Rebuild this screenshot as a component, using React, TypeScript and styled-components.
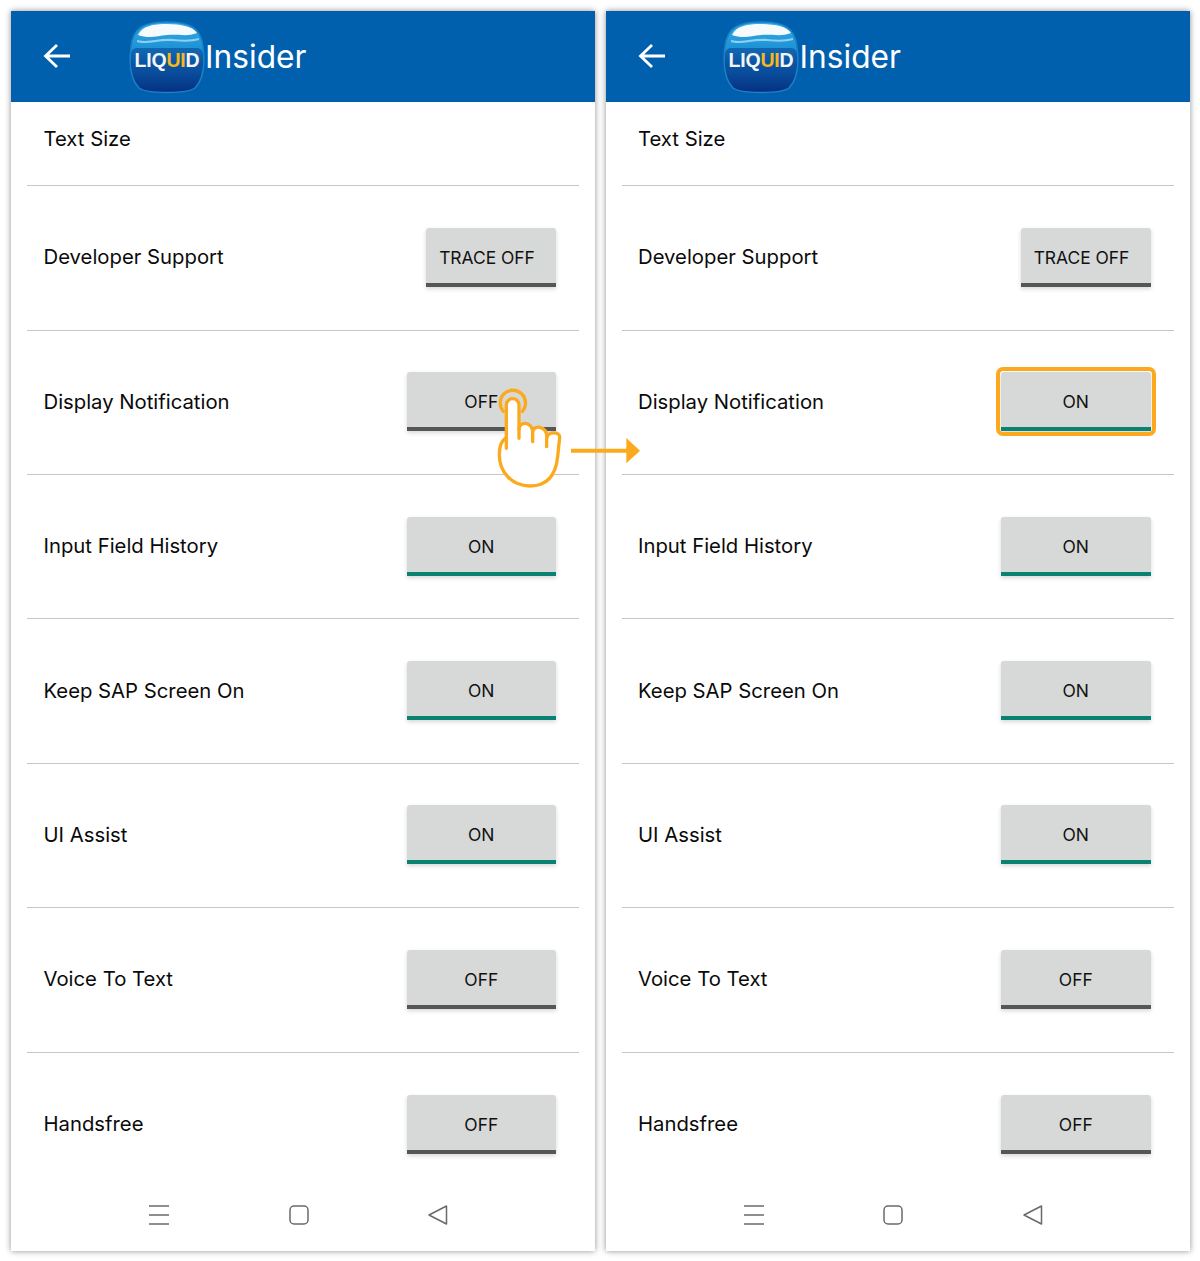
import React from "react";
import styled, { createGlobalStyle } from "styled-components";

const GlobalStyle = createGlobalStyle`
  html, body {
    margin: 0;
    padding: 0;
    background: #fff;
    font-family: Inter, "Liberation Sans", Arial, sans-serif;
  }
`;

const Page = styled.div`
  position: relative;
  width: 1200px;
  height: 1261px;
  padding: 11px 10px 10px 11px;
  box-sizing: border-box;
  display: flex;
  gap: 10.5px;
  overflow: hidden;
`;

const Panel = styled.section`
  width: 584px;
  height: 1240px;
  background: #fff;
  box-shadow: 0 0 6px rgba(0, 0, 0, 0.45);
  display: flex;
  flex-direction: column;
`;

const Header = styled.header`
  height: 91px;
  flex: none;
  background: #0060ae;
  display: flex;
  align-items: center;
  padding-left: 32px;
`;

const BackButton = styled.svg`
  width: 28px;
  height: 26px;
  flex: none;
  margin-right: 57.5px;
  margin-top: -2px;
`;

const Logo = styled.svg`
  width: 76px;
  height: 74px;
  flex: none;
  margin-top: 2px;
`;

const Brand = styled.span`
  margin-left: 0.5px;
  margin-top: 1px;
  font-size: 31.7px;
  line-height: 40px;
  color: #fff;
`;

const List = styled.div`
  flex: none;
  padding: 0 16px;
  display: flex;
  flex-direction: column;
`;

const Row = styled.div<{ $first?: boolean; $last?: boolean }>`
  box-sizing: border-box;
  height: ${(p) => (p.$first ? "84.2px" : "144.4px")};
  padding: ${(p) => (p.$first ? "0 23px 9px 16.5px" : "0 23px 1px 16.5px")};
  border-bottom: ${(p) => (p.$last ? "none" : "1.5px solid #c6c6c6")};
  display: flex;
  align-items: center;
  justify-content: space-between;
`;

const Label = styled.span`
  font-size: 20.3px;
  line-height: 28px;
  color: #0a0a0a;
`;

const Toggle = styled.button<{ $on?: boolean; $wide?: boolean; $focused?: boolean }>`
  position: relative;
  box-sizing: border-box;
  width: ${(p) => (p.$wide ? "130px" : "149.5px")};
  height: 59px;
  padding: 4px ${(p) => (p.$wide ? "8px" : "0")} 0 0;
  border: none;
  border-bottom: 4px solid ${(p) => (p.$on ? "#0a8271" : "#565656")};
  border-radius: 3px 3px 0 0;
  background: #d7d9d8;
  box-shadow: 0 2px 4px rgba(0, 0, 0, 0.16);
  font-family: inherit;
  font-size: 17.4px;
  color: #111;

  &::after {
    content: "";
    display: ${(p) => (p.$focused ? "block" : "none")};
    position: absolute;
    inset: -5px -5px -9px -5px;
    border: 4.5px solid #fca91f;
    border-radius: 7px;
  }
`;

const NavBar = styled.nav`
  flex: none;
  padding: 8.4px 0 0 138px;
  display: flex;
  gap: 119.5px;
`;

const NavIcon = styled.svg`
  width: 20px;
  height: 20px;
  flex: none;
`;

const TapGesture = styled.svg`
  position: absolute;
  left: 390px;
  top: 350px;
  width: 270px;
  height: 150px;
`;

const settings = [
  { label: "Input Field History", on: true },
  { label: "Keep SAP Screen On", on: true },
  { label: "UI Assist", on: true },
  { label: "Voice To Text", on: false },
  { label: "Handsfree", on: false },
];

const LiquidLogo = ({ id }: { id: string }) => (
  <Logo viewBox="0 0 76 74">
    <defs>
      <linearGradient id={`${id}-body`} x1="0" y1="0" x2="0" y2="1">
        <stop offset="0" stopColor="#35ade6" />
        <stop offset="0.42" stopColor="#1a8fd4" />
        <stop offset="0.6" stopColor="#0a5aa8" />
        <stop offset="1" stopColor="#062f80" />
      </linearGradient>
    </defs>
    <path
      d="M38 1 C60 1 72 6 74 26 C76 42 75 58 66 67 C58 73 18 73 10 67 C1 58 0 42 2 26 C4 6 16 1 38 1 Z"
      fill={`url(#${id}-body)`}
      stroke="#1b82c8"
      strokeWidth="1.5"
    />
    <path d="M9 14 C13 5 24 3 38 3 C52 3 65 6 68 12 C58 16 50 13 38 14 C28 15 20 18 9 14 Z" fill="#f6fafc" />
    <path d="M8 19 C20 22 30 17 44 18 C54 19 62 19 70 17 L70 19 C60 22 48 20 38 20 C28 20 16 24 8 21 Z" fill="#8fd0f0" />
    <rect x="2" y="27" width="72" height="24" rx="6" fill="#0a4f9c" opacity="0.65" />
    <text
      x="38"
      y="45.5"
      textAnchor="middle"
      fontFamily="'Liberation Sans', sans-serif"
      fontWeight="700"
      fontSize="19.5"
      letterSpacing="-0.2"
      fill="#f2f4f6"
    >
      LIQ<tspan fill="#f5b81c">UI</tspan>D
    </text>
  </Logo>
);

const PhonePanel = ({ id, focused }: { id: string; focused?: boolean }) => (
  <Panel>
    <Header>
      <BackButton viewBox="0 0 28 26" fill="none" stroke="#fff" strokeWidth="2.8">
        <path d="M27 13 H3 M14 2 L2.5 13 L14 24" />
      </BackButton>
      <LiquidLogo id={id} />
      <Brand>Insider</Brand>
    </Header>
    <List>
      <Row $first>
        <Label>Text Size</Label>
      </Row>
      <Row>
        <Label>Developer Support</Label>
        <Toggle $wide>TRACE OFF</Toggle>
      </Row>
      <Row>
        <Label>Display Notification</Label>
        <Toggle $on={focused} $focused={focused}>
          {focused ? "ON" : "OFF"}
        </Toggle>
      </Row>
      {settings.map((s, i) => (
        <Row key={s.label} $last={i === settings.length - 1}>
          <Label>{s.label}</Label>
          <Toggle $on={s.on}>{s.on ? "ON" : "OFF"}</Toggle>
        </Row>
      ))}
    </List>
    <NavBar>
      <NavIcon viewBox="0 0 20 20" fill="none" stroke="#6a6a6a" strokeWidth="1.5">
        <path d="M0 1 H20 M0 10 H20 M0 19 H20" />
      </NavIcon>
      <NavIcon viewBox="0 0 20 20" fill="none" stroke="#6a6a6a" strokeWidth="1.5">
        <rect x="1" y="1" width="18" height="18" rx="4" />
      </NavIcon>
      <NavIcon viewBox="0 0 20 20" fill="none" stroke="#6a6a6a" strokeWidth="1.5" strokeLinejoin="round">
        <path d="M1 10 L18.5 1 V19 Z" />
      </NavIcon>
    </NavBar>
  </Panel>
);

export default function App() {
  return (
    <Page>
      <GlobalStyle />
      <PhonePanel id="left" />
      <PhonePanel id="right" focused />
      <TapGesture viewBox="0 0 810 450" fill="none" stroke="#fcaa1d" strokeWidth="10" strokeLinecap="round" strokeLinejoin="round">
        <path d="M340 184 A38 38 0 1 1 397 184" />
        <path
          d="M349 262 C332 275 328 290 328 315 C328 362 362 408 420 408 C478 408 498 370 503 320 L509 262 C510 244 474 244 471 262 C470 226 430 224 428 245 C425 214 388 212 387 238 L387 165 A19 19 0 0 0 349 165 Z"
          fill="#fff"
        />
        <path d="M387 235 V265 M428 245 V275 M470 262 V290 M349 262 V295" />
        <path d="M543 302 H712" strokeLinecap="butt" strokeWidth="12" />
        <path d="M709 264 L750 302 L709 340 Z" fill="#fcaa1d" stroke="none" />
      </TapGesture>
    </Page>
  );
}
